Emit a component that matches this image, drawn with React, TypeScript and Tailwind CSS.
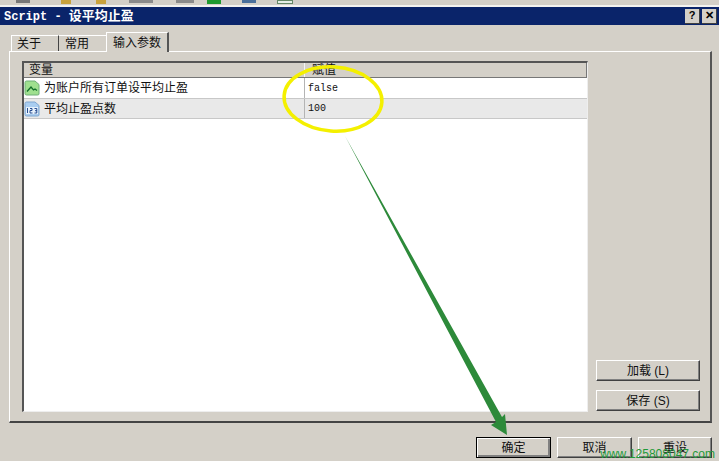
const cjk = "font-['Liberation_Sans','Noto_Sans_CJK_SC',sans-serif]";

function ClassicButton({ label, def }: { label: string; def?: boolean }) {
  return (
    <div
      className={`flex items-center justify-center h-[21px] w-full text-[12px] text-[#111] bg-[#d4d0c8] ${
        def
          ? "border border-black shadow-[inset_1px_1px_0_#fff,inset_-2px_-2px_0_#808080]"
          : "border-t border-l border-t-white border-l-white border-r border-b border-r-[#404040] border-b-[#404040] shadow-[inset_-1px_-1px_0_#808080]"
      }`}
    >
      {label}
    </div>
  );
}

function ChartIcon() {
  return (
    <svg width="16" height="16" viewBox="0 0 16 16" className="shrink-0">
      <path d="M1 2.5 Q1 1 2.5 1 H11 L15 4.5 V14 Q15 15 13.5 15 H2.5 Q1 15 1 13.5 Z" fill="#9fe08f" stroke="#6fae78" />
      <path d="M3 11.5 L7 7 L9.5 10 L11 9 L13 10.5" fill="none" stroke="#12702a" strokeWidth="1.3" />
    </svg>
  );
}

function NumberIcon() {
  return (
    <svg width="16" height="16" viewBox="0 0 16 16" className="shrink-0">
      <path d="M1 2.5 Q1 1 2.5 1 H11 L15 4.5 V14 Q15 15 13.5 15 H2.5 Q1 15 1 13.5 Z" fill="#a9cdf0" stroke="#7fa6cf" />
      <rect x="2" y="6" width="12" height="7" fill="#e6f1fb" />
      <path d="M3.5 7 V12 M6 7.5 H8 V9.5 H6 V12 H8.5 M10.5 7.5 H12.8 V12 H10.5 M11 9.7 H12.8" fill="none" stroke="#143c86" strokeWidth="0.9" />
    </svg>
  );
}

function Row({ icon, name, value, shaded }: { icon: React.ReactNode; name: string; value: string; shaded?: boolean }) {
  return (
    <div className={`flex border-b border-b-[#c8c8c8] ${shaded ? "h-[20px] bg-[#e9e9e9]" : "h-[21px] bg-white"}`}>
      <div className="flex items-center gap-[4px] w-[281px] border-r border-r-[#b4b4b4] text-[12px] text-[#111]">
        {icon}
        <span>{name}</span>
      </div>
      <div className="flex items-center pl-[3px] font-['Liberation_Mono',monospace] text-[10px] text-[#111]">{value}</div>
    </div>
  );
}

export default function App() {
  return (
    <div className={`relative w-[719px] h-[461px] overflow-hidden flex flex-col bg-[#d4d0c8] ${cjk}`}>
      {/* bit of the main window toolbar that shows above the dialog */}
      <div className="flex items-start gap-[3px] h-[5px] overflow-hidden pl-[16px] text-[#555]">
        <div className="w-[14px] h-[3px] bg-[#777] mr-[28px]" />
        <div className="w-[10px] h-[4px] bg-[#c9a23c] mr-[22px]" />
        <div className="w-[10px] h-[4px] bg-[#c9a23c] mr-[20px]" />
        <div className="w-[24px] h-[3px] bg-[#8a8a8a] mr-[20px]" />
        <div className="w-[18px] h-[3px] bg-[#8a8a8a] mr-[10px]" />
        <div className="w-[14px] h-[4px] bg-[#1f9a2f] mr-[18px]" />
        <div className="w-[14px] h-[3px] bg-[#4a6f9a] mr-[18px]" />
        <div className="w-[16px] h-[4px] bg-[#e6efe6] border border-[#668866]" />
      </div>
      <div className="h-[2px] bg-[#f4f3f0]" />

      {/* title bar */}
      <div className="flex items-center justify-between h-[18px] bg-[#0a246a] pl-[4px] pr-[2px]">
        <div className="text-white text-[13px] font-bold whitespace-pre">
          <span className="font-['Liberation_Mono',monospace] text-[12px]">Script - </span>设平均止盈
        </div>
        <div className="flex gap-[2px]">
          <div className="flex items-center justify-center w-[15px] h-[15px] bg-[#d4d0c8] border-r border-b border-r-[#404040] border-b-[#404040] text-[11px] font-bold text-black">?</div>
          <div className="flex items-center justify-center w-[15px] h-[15px] bg-[#d4d0c8] border-r border-b border-r-[#404040] border-b-[#404040] text-[11px] font-bold text-black">✕</div>
        </div>
      </div>

      {/* tabs */}
      <div className="flex items-end h-[26px] pl-[11px]">
        <div className="flex items-center w-[47px] h-[16px] pl-[5px] border-t border-l border-t-white border-l-white text-[12px] text-[#111]">关于</div>
        <div className="flex items-center w-[48px] h-[16px] pl-[6px] border-t border-l border-t-white border-l-[#444] text-[12px] text-[#111]">常用</div>
        <div className="flex items-center justify-center w-[63px] h-[20px] -mb-px relative z-10 bg-[#d4d0c8] border-t border-l border-t-white border-l-white border-r-2 border-r-[#555] text-[12px] text-[#111]">输入参数</div>
      </div>

      {/* tab panel */}
      <div className="flex w-[703px] h-[372px] ml-[9px] pl-[12px] pt-[9px] pb-[9px] border-t border-l border-t-white border-l-white border-r-2 border-b-2 border-r-[#555] border-b-[#444]">
        <div className="flex flex-col w-[566px] bg-white border-t-2 border-l-2 border-t-[#555] border-l-[#555] border-r border-b border-r-[#eee] border-b-[#eee]">
          <div className="flex shrink-0 h-[15px] bg-[#d4d0c8] border-b border-b-[#777] border-r border-r-[#777] text-[12px] text-[#111]">
            <div className="w-[281px] pl-[5px] border-r border-r-[#f4f4f4] leading-[15px]">变量</div>
            <div className="pl-[7px] leading-[15px]">赋值</div>
          </div>
          <Row icon={<ChartIcon />} name="为账户所有订单设平均止盈" value="false" />
          <Row icon={<NumberIcon />} name="平均止盈点数" value="100" shaded />
        </div>
        <div className="flex flex-col justify-end gap-[9px] w-[104px] ml-[8px] pb-[1px]">
          <ClassicButton label="加载 (L)" />
          <ClassicButton label="保存 (S)" />
        </div>
      </div>

      {/* footer buttons */}
      <div className="flex justify-end gap-[6px] mt-[14px] pr-[7px]">
        <div className="w-[75px]"><ClassicButton label="确定" def /></div>
        <div className="w-[75px]"><ClassicButton label="取消" /></div>
        <div className="w-[74px]"><ClassicButton label="重设" /></div>
      </div>

      {/* annotations drawn on top of the screenshot */}
      <svg width="719" height="461" viewBox="0 0 719 461" className="absolute inset-0 pointer-events-none">
        <ellipse cx="333" cy="99" rx="49" ry="32" fill="none" stroke="#f4f000" strokeWidth="3.5" transform="rotate(4 333 99)" />
        <path d="M345 136 L502 417 L505 414 L507 435 L491 425 L496 422 Z" fill="#2d8a3a" />
      </svg>
      <div className="absolute right-[4px] bottom-[1px] font-['Liberation_Sans',sans-serif] text-[12px] leading-none text-[#1f9a3a]">www.125808047.com</div>
    </div>
  );
}
